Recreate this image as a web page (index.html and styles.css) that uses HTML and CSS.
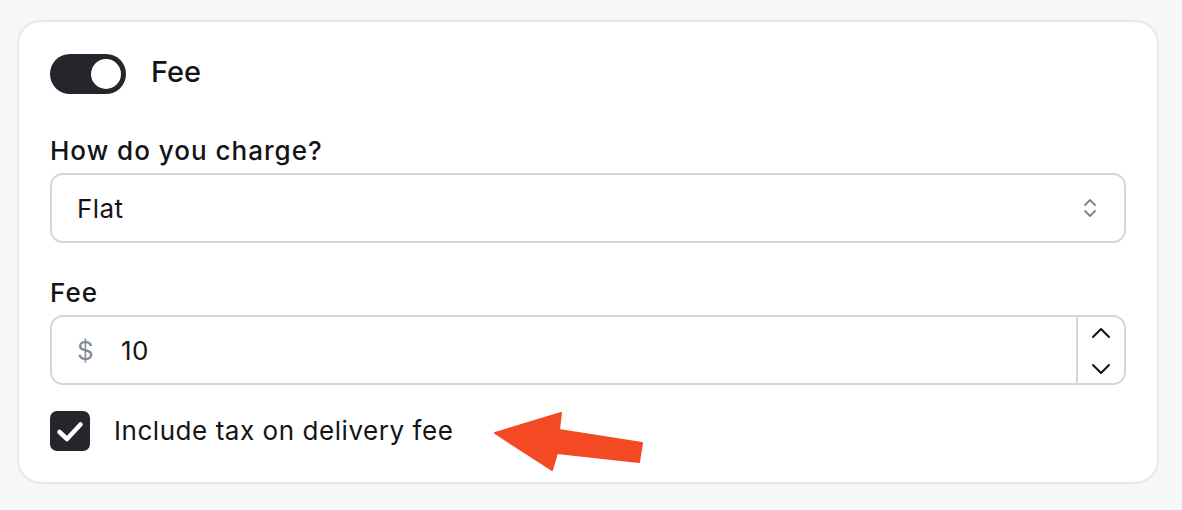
FILE: index.html
```html
<!DOCTYPE html>
<html>
<head>
  <meta charset="utf-8">
  <link rel="stylesheet" href="styles.css">
</head>
<body>
  <div class="card">
    <div class="toggle-row">
      <span class="toggle on"><span class="toggle-knob"></span></span>
      <span class="toggle-label">Fee</span>
    </div>

    <div class="field field-charge">
      <label class="field-label">How do you charge?</label>
      <div class="select">
        <span class="select-value">Flat</span>
        <svg class="select-icon" width="16" height="22" viewBox="0 0 16 22">
          <path d="M3 8 L8 3 L13 8" />
          <path d="M3 14 L8 19 L13 14" />
        </svg>
      </div>
    </div>

    <div class="field field-fee">
      <label class="field-label">Fee</label>
      <div class="number-input">
        <span class="prefix">$</span>
        <span class="number-value">10</span>
        <div class="stepper">
          <svg width="20" height="12" viewBox="0 0 20 12"><path d="M2 10 L10 2 L18 10" /></svg>
          <svg width="20" height="12" viewBox="0 0 20 12"><path d="M2 2 L10 10 L18 2" /></svg>
        </div>
      </div>
    </div>

    <div class="checkbox-row">
      <span class="checkbox checked">
        <svg width="40" height="40" viewBox="0 0 40 40"><path d="M9.5 21 L17 28 L30.5 13.5" /></svg>
      </span>
      <span class="checkbox-label">Include tax on delivery fee</span>
    </div>

    <!-- annotation arrow -->
    <svg class="callout-arrow" width="180" height="80" viewBox="0 0 180 80">
      <polygon points="15,33 81,13 79,30 162,43 159,62 77,53 72,70" />
    </svg>
  </div>
</body>
</html>
```

FILE: styles.css
```css
body {
  margin: 0;
  padding: 20px 23px 0 17px;
  background: #f6f7f9;
  font-family: Inter, 'Noto Sans', sans-serif;
  color: #131417;
}

.card {
  position: relative;
  background: #fff;
  border: 2px solid #e6e8ec;
  border-radius: 24px;
  padding: 32px 31px 31px 31px;
}

.toggle-row {
  display: flex;
  align-items: center;
  gap: 25px;
}

.toggle {
  display: flex;
  align-items: center;
  justify-content: flex-end;
  box-sizing: border-box;
  width: 76px;
  height: 40px;
  padding: 5px;
  border-radius: 20px;
  background: #25262b;
}

.toggle-knob {
  width: 30px;
  height: 30px;
  border-radius: 50%;
  background: #fff;
}

.toggle-label {
  font-size: 29px;
  font-weight: 500;
  line-height: 36px;
  margin-bottom: 4px;
}

.field-label {
  display: block;
  font-size: 26px;
  font-weight: 500;
  line-height: 40px;
  letter-spacing: 1px;
  margin-bottom: 2px;
}

.field-charge {
  margin-top: 37px;
}

.field-fee {
  margin-top: 30px;
}

.select,
.number-input {
  display: flex;
  align-items: center;
  box-sizing: border-box;
  height: 70px;
  border: 2px solid #d3d6dc;
  border-radius: 13px;
  font-size: 26px;
  letter-spacing: 0.4px;
}

.select {
  padding: 0 26px 0 25px;
}

.select-value {
  flex: 1;
}

.select-icon path {
  fill: none;
  stroke: #7d828b;
  stroke-width: 1.8;
  stroke-linecap: round;
  stroke-linejoin: round;
}

.number-input {
  padding-left: 25px;
}

.prefix {
  color: #858a93;
  width: 44px;
}

.number-value {
  flex: 1;
}

.stepper {
  align-self: stretch;
  width: 46px;
  border-left: 2px solid #d3d6dc;
  display: flex;
  flex-direction: column;
  align-items: center;
  justify-content: space-between;
  padding: 10px 0 8px;
}

.stepper path {
  fill: none;
  stroke: #111;
  stroke-width: 2;
  stroke-linecap: round;
  stroke-linejoin: round;
}

.checkbox-row {
  display: flex;
  align-items: center;
  gap: 24px;
  margin-top: 26px;
}

.checkbox {
  width: 40px;
  height: 40px;
  border-radius: 7px;
  background: #25262b;
}

.checkbox svg {
  display: block;
}

.checkbox path {
  fill: none;
  stroke: #fff;
  stroke-width: 4.5;
  stroke-linecap: round;
  stroke-linejoin: round;
}

.checkbox-label {
  font-size: 26px;
  line-height: 36px;
  letter-spacing: 0.55px;
}

.callout-arrow {
  position: absolute;
  left: 461px;
  top: 378px;
}

.callout-arrow polygon {
  fill: #f34a24;
  stroke: #f34a24;
  stroke-width: 2;
  stroke-linejoin: round;
}
```
